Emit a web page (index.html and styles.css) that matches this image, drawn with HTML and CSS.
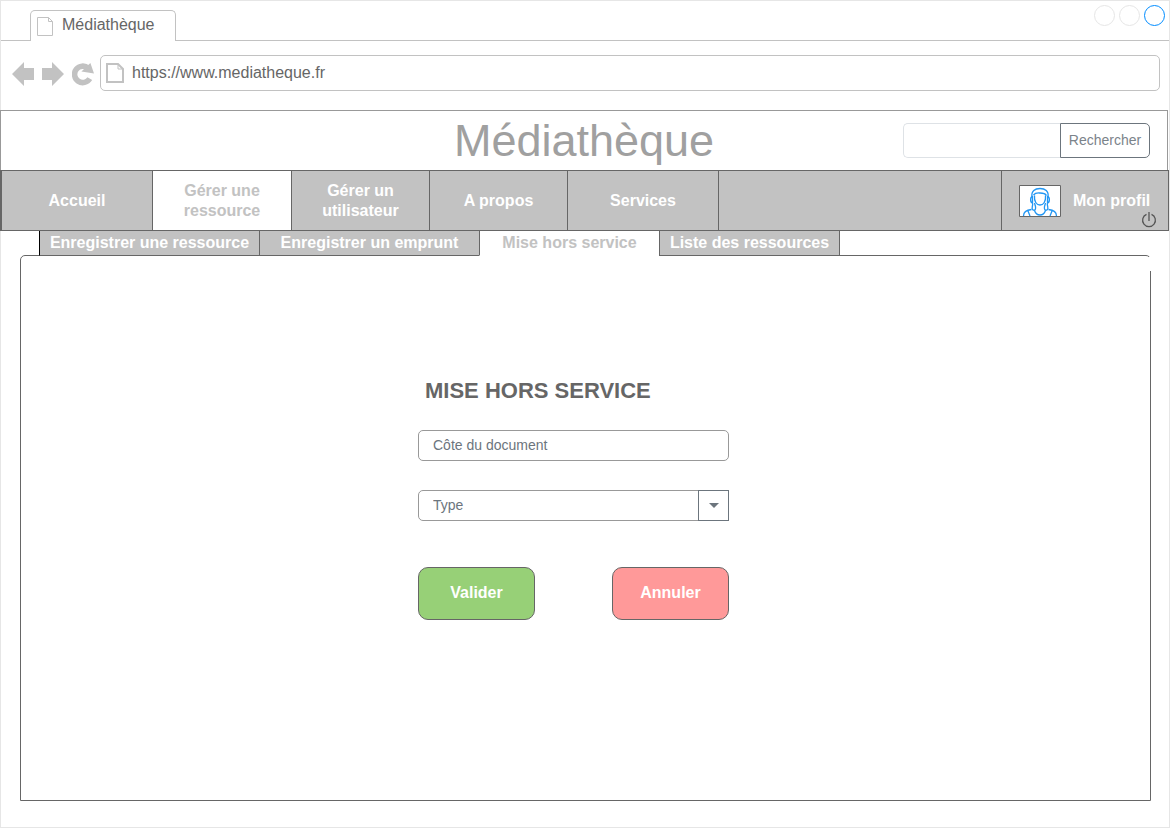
FILE: index.html
```html
<!DOCTYPE html>
<html lang="fr">
<head>
<meta charset="utf-8">
<title>Médiathèque</title>
<link rel="stylesheet" href="styles.css">
</head>
<body>
<div class="window">
  <div class="tab-strip">
    <div class="browser-tab">
      <svg class="tab-icon" width="17" height="19" viewBox="0 0 17 19"><path d="M.5.5h11l4 4v14H.5zM11.5.5v4h4" fill="#fff" stroke="#c2c2c2"/></svg>
      <span>Médiathèque</span>
    </div>
    <div class="window-controls">
      <button class="dot" type="button" aria-label="Réduire"></button>
      <button class="dot" type="button" aria-label="Agrandir"></button>
      <button class="dot dot-active" type="button" aria-label="Fermer"></button>
    </div>
  </div>

  <div class="toolbar">
    <div class="tools">
      <button class="tool" type="button" aria-label="Précédent"><svg width="22" height="24" viewBox="0 0 22 24"><path d="M0 12 12 0v6h10v12H12v6z" fill="#c2c2c2"/></svg></button>
      <button class="tool" type="button" aria-label="Suivant"><svg width="22" height="24" viewBox="0 0 22 24"><path d="M22 12 10 0v6H0v12h10v6z" fill="#c2c2c2"/></svg></button>
      <button class="tool" type="button" aria-label="Actualiser"><svg width="22" height="24" viewBox="0 0 22 24"><path d="M17.8 16.6A8.2 8.2 0 1 1 16.2 6.2" fill="none" stroke="#c2c2c2" stroke-width="5.6"/><path d="M18.4 1 22 11.6 9.4 9.4z" fill="#c2c2c2"/></svg></button>
    </div>
    <label class="address">
      <svg width="18" height="20" viewBox="0 0 18 20"><path d="M1 1h11l5 5v13H1z" fill="#fff" stroke="#c2c2c2" stroke-width="2"/><path d="M12 1v5h5" fill="none" stroke="#c2c2c2"/></svg>
      <input class="address-input" type="text" value="https://www.mediatheque.fr" aria-label="Adresse">
    </label>
  </div>

  <header class="site-header">
    <h1 class="site-title">Médiathèque</h1>
    <form class="search">
      <input class="search-input" type="text" aria-label="Recherche">
      <button class="search-button" type="button">Rechercher</button>
    </form>
  </header>

  <nav class="main-nav">
    <a class="nav-item nav-home" href="#">Accueil</a>
    <a class="nav-item nav-active" href="#">Gérer une ressource</a>
    <a class="nav-item" href="#">Gérer un utilisateur</a>
    <a class="nav-item" href="#">A propos</a>
    <a class="nav-item nav-services" href="#">Services</a>
    <div class="profile">
      <svg class="avatar" width="42" height="32" viewBox="0 0 42 32"><path d="M.5.5h41v31H.5z" fill="#fff" stroke="#666"/><g fill="none" stroke="#2196f3" stroke-width="1.3"><path d="M13 12c-1-6 3-8.500 8-8.500s9 2.500 8 8.500M14.500 10c2-2.500 4-2 6.500-2 3 0 5 0 6.500 2.500M15.500 10.500c-.5 6 2 9.500 5.500 9.500s6-3.500 5.500-9.500"/><path d="M13.500 11.500c-2.500.5-2.500 6 0 6.500zM28.500 11.500c2.500.5 2.500 6 0 6.500zM13.500 18c1 3-2 5 .5 7 2 1 3-1 2.500-3.500l-1-3.500M28.500 18c-1 3 2 5-.5 7-2 1-3-1-2.500-3.500l1-3.500"/><path d="M4.500 31c0-4 3-6 8-6.500M37.500 31c0-4-3-6-8-6.500M9 26l2 5M33 26l-2 5M15.500 25.500c1 3 3 4.500 5.500 4.500s4.500-1.500 5.500-4.500"/></g></svg>
      <a class="profile-link" href="#">Mon profil</a>
      <button class="power" type="button" aria-label="Déconnexion"><svg width="16" height="16" viewBox="0 0 16 16"><path d="M5.500 2.300a6.400 6.400 0 1 0 5 0M8 0v9" fill="none" stroke="#555" stroke-width="1.3"/></svg></button>
    </div>
  </nav>

  <main class="content">
    <nav class="sub-nav">
      <a class="sub-item" href="#">Enregistrer une ressource</a>
      <a class="sub-item" href="#">Enregistrer un emprunt</a>
      <a class="sub-item sub-active" href="#">Mise hors service</a>
      <a class="sub-item" href="#">Liste des ressources</a>
    </nav>
    <section class="panel">
      <form class="form">
        <h2 class="form-title">MISE HORS SERVICE</h2>
        <input class="field" type="text" placeholder="Côte du document" aria-label="Côte du document">
        <div class="select-box">
          <select class="field" aria-label="Type"><option>Type</option></select>
          <span class="select-arrow"><svg width="10" height="5" viewBox="0 0 10 5"><path d="M0 0h10L5 5z" fill="#6c757d"/></svg></span>
        </div>
        <div class="actions">
          <button class="action action-ok" type="button">Valider</button>
          <button class="action action-cancel" type="button">Annuler</button>
        </div>
      </form>
    </section>
  </main>
</div>
</body>
</html>
```
FILE: styles.css
```css
* {
  box-sizing: border-box;
}

body {
  margin: 0;
  background: #fff;
  color: #666;
  font: 16px/20px "Liberation Sans", Arial, sans-serif;
}

svg {
  display: block;
  flex: none;
}

a {
  color: inherit;
  text-decoration: none;
}

input,
select,
button {
  margin: 0;
  padding: 0;
  border: 0;
  border-radius: 0;
  background: none;
  color: inherit;
  font: inherit;
}

.window {
  display: flex;
  flex-direction: column;
  min-height: 100vh;
  border: 1px solid #e6e6e6;
}

.tab-strip {
  display: flex;
  justify-content: space-between;
  height: 40px;
  padding: 4px 4px 0 29px;
  border-bottom: 1px solid #c2c2c2;
}

.browser-tab {
  display: flex;
  gap: 8px;
  width: 146px;
  height: 31px;
  margin-top: 5px;
  padding: 4px 6px;
  border: 1px solid #c2c2c2;
  border-bottom: 0;
  border-radius: 5px 5px 0 0;
  background: #fff;
}

.tab-icon {
  margin-top: 2px;
}

.window-controls {
  display: flex;
  gap: 4px;
}

.dot {
  width: 21px;
  height: 21px;
  border: 1px solid #e6e6e6;
  border-radius: 50%;
}

.dot-active {
  border-color: #008cff;
}

.toolbar {
  display: flex;
  gap: 6px;
  height: 69px;
  padding: 14px 9px 0 11px;
}

.tools {
  display: flex;
  gap: 8px;
  height: 38px;
  align-items: center;
}

.address {
  display: flex;
  flex: 1;
  gap: 8px;
  align-items: center;
  height: 36px;
  padding: 0 5px;
  border: 1px solid #c2c2c2;
  border-radius: 5px;
}

.address-input {
  flex: 1;
  min-width: 0;
}

.site-header {
  display: grid;
  grid-template-columns: 1fr auto 1fr;
  align-items: center;
  height: 60px;
  margin: 0 1px 0 -1px;
  padding: 0 17px;
  border: 1px solid #999;
  border-bottom: 0;
}

.site-title {
  grid-column: 2;
  margin: 0;
  color: #a0a0a0;
  font-size: 45px;
  font-weight: 400;
  line-height: 58px;
}

.search {
  display: flex;
  justify-self: end;
  height: 35px;
}

.search-input {
  width: 157px;
  border: 1px solid #dee2e6;
  border-right: 0;
  border-radius: 5px 0 0 5px;
}

.search-button {
  width: 90px;
  padding-bottom: 2px;
  border: 1px solid #6c757d;
  border-radius: 0 5px 5px 0;
  color: #7b838a;
  font-size: 14px;
}

.main-nav {
  display: flex;
  height: 61px;
  margin-left: -1px;
  border: 1px solid #666;
  border-left-width: 2px;
  background: #c2c2c2;
  color: #fff;
  font-weight: 700;
}

.nav-item {
  display: flex;
  align-items: center;
  justify-content: center;
  width: 138px;
  padding: 0 24px;
  border-right: 1px solid #666;
  text-align: center;
}

.nav-home,
.nav-services {
  width: 151px;
}

.nav-active {
  width: 139px;
  background: #fff;
  color: #c2c2c2;
}

.profile {
  position: relative;
  display: flex;
  gap: 12px;
  align-items: center;
  width: 167px;
  margin-left: auto;
  padding-left: 17px;
  border-left: 1px solid #666;
}

.power {
  position: absolute;
  right: 11px;
  bottom: 2px;
}

.content {
  display: flex;
  flex: 1;
  flex-direction: column;
  padding: 0 18px 26px 19px;
}

.sub-nav {
  position: relative;
  z-index: 1;
  display: flex;
  margin-left: 19px;
  font-weight: 700;
  text-align: center;
}

.sub-item {
  width: 220px;
  height: 25px;
  padding-top: 2px;
  border: 1px solid #666;
  border-width: 0 0 1px 1px;
  background: #c2c2c2;
  color: #fff;
  white-space: nowrap;
}

.sub-item:first-child {
  border-left-color: #000;
}

.sub-active {
  width: 180px;
  border-bottom-color: #fff;
  background: #fff;
  color: #c2c2c2;
}

.sub-item:last-child {
  width: 181px;
  border-right-width: 1px;
}

.panel {
  position: relative;
  display: flex;
  flex: 1;
  justify-content: center;
  margin-top: -1px;
  padding: 123px 0 32px;
  border: 1px solid #666;
  border-radius: 5px 5px 0 0;
}

/* Open notch under the top right corner */
.panel::after {
  content: "";
  position: absolute;
  top: 1px;
  right: -1px;
  width: 4px;
  height: 14px;
  background: #fff;
}

.form {
  width: 311px;
  margin-right: 24px;
}

.form-title {
  margin: 0 0 27px;
  padding-left: 7px;
  color: #666;
  font-size: 22px;
  line-height: 24px;
}

.field {
  display: block;
  width: 100%;
  height: 31px;
  padding: 0 14px 2px;
  border: 1px solid #999;
  border-radius: 5px;
  appearance: none;
  color: #6c757d;
  font-size: 14px;
}

.field::placeholder {
  color: #6c757d;
  opacity: 1;
}

.select-box {
  position: relative;
  margin-top: 29px;
}

.select-arrow {
  position: absolute;
  top: 0;
  right: 0;
  display: flex;
  align-items: center;
  justify-content: center;
  width: 31px;
  height: 31px;
  border: 1px solid #6c757d;
  background: #fff;
  pointer-events: none;
}

.actions {
  display: flex;
  justify-content: space-between;
  margin-top: 46px;
}

.action {
  width: 117px;
  height: 53px;
  padding-bottom: 2px;
  border: 1px solid #666;
  border-radius: 10px;
  color: #fff;
  font-weight: 700;
}

.action-ok {
  background: #97d077;
}

.action-cancel {
  background: #ff9999;
}
```
